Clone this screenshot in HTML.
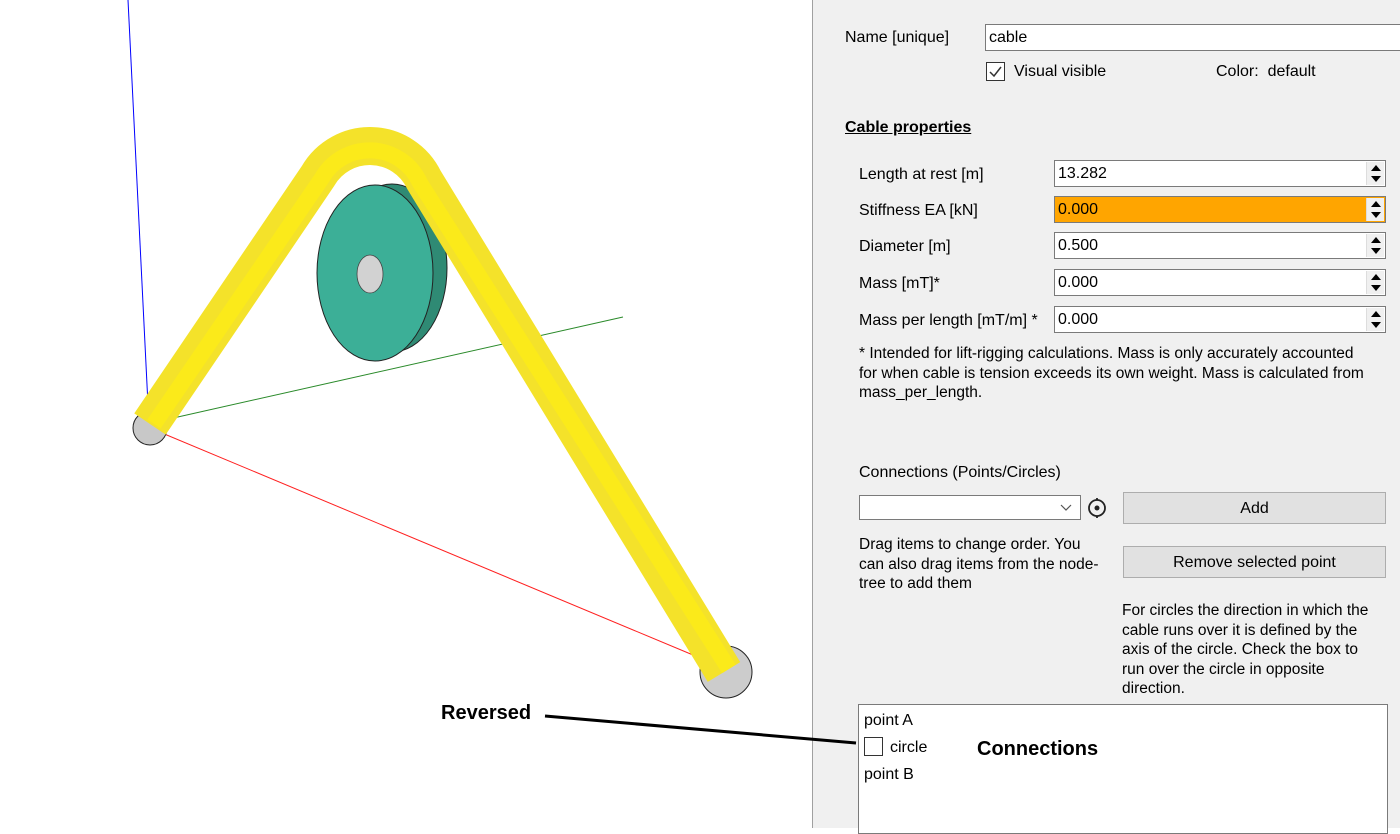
<!DOCTYPE html>
<html><head><meta charset="utf-8"><style>
*{margin:0;padding:0;box-sizing:border-box}
body{width:1400px;height:828px;overflow:hidden;background:#fff;font-family:"Liberation Sans",sans-serif;font-size:16px;color:#000;position:relative}
.a{position:absolute;white-space:nowrap}
#panel{position:absolute;left:812px;top:0;width:588px;height:828px;background:#f0f0f0;border-left:1px solid #a0a0a0}
.in{position:absolute;background:#fff;border:1px solid #7a7a7a;height:27px;padding:4px 0 0 3px}
.spin{position:absolute;right:1px;top:1px;width:18px;height:23px;background:#f0f0f0;border-left:1px solid #ddd}
.spin i{position:absolute;left:4px;width:0;height:0;border-left:5px solid transparent;border-right:5px solid transparent}
.btn{position:absolute;background:#e1e1e1;border:1px solid #adadad;text-align:center;height:32px;line-height:32px}
.p{position:absolute;line-height:19.5px;font-size:15.5px}
</style></head><body>
<svg width="812" height="828" style="position:absolute;left:0;top:0">
<line x1="128" y1="0" x2="148" y2="405" stroke="#0000ff" stroke-width="1"/>
<line x1="160" y1="421" x2="623" y2="317" stroke="#2a8a2a" stroke-width="1"/>
<line x1="150" y1="428" x2="705" y2="660" stroke="#ff2020" stroke-width="1"/>
<circle cx="150" cy="428" r="17" fill="#c8c8c8" stroke="#222" stroke-width="1"/>
<circle cx="726" cy="672" r="26" fill="#cccccc" stroke="#222" stroke-width="1"/>
<ellipse cx="392" cy="268" rx="55" ry="84" fill="#2f8a74" stroke="#222" stroke-width="1"/>
<ellipse cx="375" cy="273" rx="58" ry="88" fill="#3caf97" stroke="#222" stroke-width="1"/>
<ellipse cx="370" cy="274" rx="13" ry="19" fill="#d2d2d2" stroke="#444" stroke-width="0.8"/>
<path d="M150 424 L318 176 A60 60 0 0 1 424 180 L724 672" fill="none" stroke="#f4e22a" stroke-width="38" stroke-linecap="butt" stroke-linejoin="round"/>
<path d="M154 424 L322 178 A55 55 0 0 1 420 183 L729 669" fill="none" stroke="#fff010" stroke-width="16" opacity="0.6"/>
</svg>
<div class="a" style="left:441px;top:702px;font-weight:bold;font-size:20px">Reversed</div>
<div id="panel"></div>
<div class="a" style="left:845px;top:29px">Name [unique]</div>
<div class="in" style="left:985px;top:24px;width:420px">cable</div>
<div class="a" style="left:986px;top:62px;width:19px;height:19px;border:1px solid #333;background:#fff"><svg width="17" height="17"><path d="M3 9 L7 13 L14 4" fill="none" stroke="#333" stroke-width="1.5"/></svg></div>
<div class="a" style="left:1014px;top:63px">Visual visible</div>
<div class="a" style="left:1216px;top:63px">Color:&nbsp; default</div>
<div class="a" style="left:845px;top:119px;font-weight:bold;text-decoration:underline">Cable properties</div>

<div class="a" style="left:859px;top:166px">Length at rest [m]</div>
<div class="a" style="left:859px;top:202px">Stiffness EA [kN]</div>
<div class="a" style="left:859px;top:238px">Diameter [m]</div>
<div class="a" style="left:859px;top:275px">Mass [mT]*</div>
<div class="a" style="left:859px;top:312px">Mass per length [mT/m] *</div>

<div class="in" style="left:1054px;top:160px;width:332px">13.282<div class="spin"><i style="top:3px;border-bottom:6px solid #000"></i><i style="top:14px;border-top:6px solid #000"></i></div></div>
<div class="in" style="left:1054px;top:196px;width:332px;background:#ffa500">0.000<div class="spin"><i style="top:3px;border-bottom:6px solid #000"></i><i style="top:14px;border-top:6px solid #000"></i></div></div>
<div class="in" style="left:1054px;top:232px;width:332px">0.500<div class="spin"><i style="top:3px;border-bottom:6px solid #000"></i><i style="top:14px;border-top:6px solid #000"></i></div></div>
<div class="in" style="left:1054px;top:269px;width:332px">0.000<div class="spin"><i style="top:3px;border-bottom:6px solid #000"></i><i style="top:14px;border-top:6px solid #000"></i></div></div>
<div class="in" style="left:1054px;top:306px;width:332px">0.000<div class="spin"><i style="top:3px;border-bottom:6px solid #000"></i><i style="top:14px;border-top:6px solid #000"></i></div></div>

<div class="p" style="left:859px;top:344px;width:540px">* Intended for lift-rigging calculations. Mass is only accurately accounted<br>for when cable is tension exceeds its own weight. Mass is calculated from<br>mass_per_length.</div>

<div class="a" style="left:859px;top:464px">Connections (Points/Circles)</div>
<div class="a" style="left:859px;top:495px;width:222px;height:25px;background:#fff;border:1px solid #7a7a7a"><svg width="12" height="8" style="position:absolute;right:8px;top:8px"><path d="M1 1 L6 6 L11 1" fill="none" stroke="#555" stroke-width="1.2"/></svg></div>
<svg class="a" style="left:1086px;top:497px" width="22" height="22"><circle cx="11" cy="11" r="8" fill="none" stroke="#222" stroke-width="1.8"/><circle cx="11" cy="11" r="2.5" fill="#222"/><line x1="11" y1="1" x2="11" y2="3" stroke="#222" stroke-width="1.8"/><line x1="11" y1="19" x2="11" y2="21" stroke="#222" stroke-width="1.8"/></svg>
<div class="btn" style="left:1123px;top:492px;width:263px">Add</div>
<div class="btn" style="left:1123px;top:546px;width:263px">Remove selected point</div>
<div class="p" style="left:859px;top:535px">Drag items to change order. You<br>can also drag items from the node-<br>tree to add them</div>
<div class="p" style="left:1122px;top:601px">For circles the direction in which the<br>cable runs over it is defined by the<br>axis of the circle. Check the box to<br>run over the circle in opposite<br>direction.</div>
<div class="a" style="left:858px;top:704px;width:530px;height:130px;background:#fff;border:1px solid #7a7a7a"></div>
<svg width="1400" height="828" style="position:absolute;left:0;top:0"><line x1="545" y1="716" x2="856" y2="743" stroke="#000" stroke-width="3"/></svg>
<div class="a" style="left:864px;top:712px">point A</div>
<div class="a" style="left:864px;top:737px;width:19px;height:19px;border:1px solid #333;background:#fff"></div>
<div class="a" style="left:890px;top:739px">circle</div>
<div class="a" style="left:864px;top:766px">point B</div>
<div class="a" style="left:977px;top:738px;font-weight:bold;font-size:20px">Connections</div>
</body></html>
